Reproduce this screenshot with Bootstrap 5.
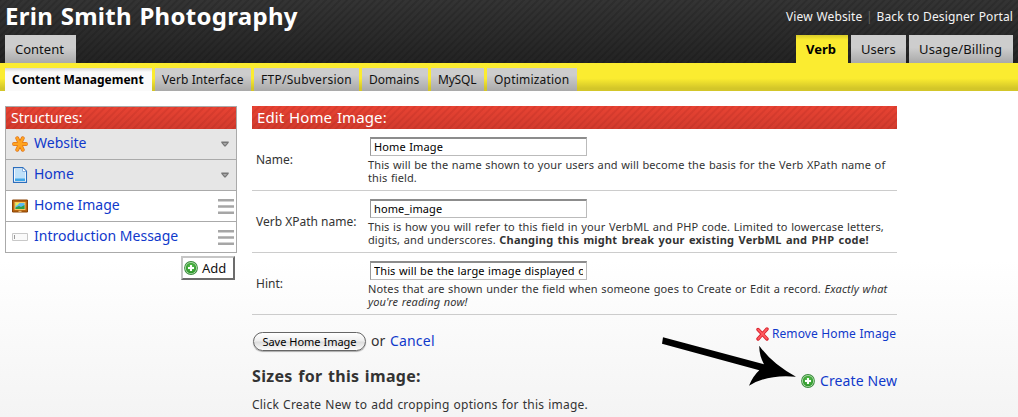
<!DOCTYPE html>
<html lang="en">
<head>
<meta charset="utf-8">
<title>Erin Smith Photography</title>
<link href="https://cdn.jsdelivr.net/npm/bootstrap@5.3.0/dist/css/bootstrap.min.css" rel="stylesheet">
<style>
body{font-family:"Noto Sans",sans-serif;font-size:12px;line-height:16px;color:#333;height:417px;overflow:hidden;background:linear-gradient(#fff 260px,#f4f4f4 417px)}
a{color:#1039cb;text-decoration:none}
.site-head{height:63px;background:repeating-linear-gradient(135deg,rgba(0,0,0,.13) 0 1px,transparent 2px 4px,rgba(0,0,0,.13) 5px),linear-gradient(#343434,#232323);padding:0 5px}
h1{font-size:24px;line-height:31px;font-weight:700;letter-spacing:.29px;word-spacing:1px;color:#fff;height:35px}
.portal-links{color:#666;padding-top:9px;letter-spacing:.12px;word-spacing:.5px}
.portal-links a{color:#f4f4f4}
.tab{display:block;height:28px;padding:0 0 0 10px;line-height:29px;font-size:13px;color:#111;background:linear-gradient(#cdcdcd 45%,#a9a9a9)}
.tab.on{background:linear-gradient(#d8cb29,#fbec30 5px);font-weight:700;color:#000}
.tabs{gap:3px}
.w-content{width:71px}
.w-verb{width:52px}
.w-users{width:55px}
.w-usage{width:104px;letter-spacing:.16px}
.bar{height:28px;background:linear-gradient(#fbec30 55%,#d3c629 90%);padding:5px 5px 0}
.sub{height:23px;padding:0 0 0 7px;line-height:23px;color:#111;background:linear-gradient(#cdcdcd 30%,#a9a9a9)}
.sub.on{background:linear-gradient(#d6d6d6,#fafafa 4px);color:#000;font-weight:700}
.w-cm{width:147px}
.w-vi{width:96px;letter-spacing:.1px}
.w-ftp{width:105px;letter-spacing:.28px}
.w-dom{width:66px}
.w-sql{width:53px;letter-spacing:-.2px}
.w-opt{width:90px;letter-spacing:.2px}
.red{background:repeating-linear-gradient(135deg,rgba(90,0,0,.09) 0 1px,transparent 2px 4px,rgba(90,0,0,.09) 5px),linear-gradient(#e84333,#d23b2d);color:#fff;height:23px;line-height:23px;padding-left:5px}
main{padding:15px 0 0 5px}
.side{width:232px}
.structure{border:1px solid #aaa}
.structure .red{height:22px;font-size:14px;line-height:21px}
.item{height:31px;padding:0 5px 3px 6px;font-size:14px;border-top:1px solid #aaa}
.item.first{border-top:0;height:30px}
.item.group{background:#e6e6e6;padding-right:7px}
.item.leaf{padding-right:2px}
.item svg:first-child{margin-right:6px;position:relative;top:1px}
.item .end{margin-top:2px}
.item .grip{margin-top:3px}
.add-btn{width:54px;height:24px;border:2px solid;border-color:#c6c6c6 #6c6c6c #6c6c6c #c6c6c6;background:#fff;font-size:13px;line-height:18px;color:#111;margin:3px 2px 0 0}
.add-btn svg{margin:0 4px 0 1px}
.pane{width:645px;margin-left:15px}
.pane>.red{font-size:15px;letter-spacing:.1px;word-spacing:.8px}
.frow{height:62px;border-bottom:1px solid #ccc}
.frow>div{padding-top:2px}
.frow label{width:116px;padding:1px 0 0 4px}
.frow input{display:block;width:217px;height:19px;border:1px solid #bbb;border-top:2px solid #8c8c8c;border-left-color:#999;border-radius:0;background:#fff;padding:0 3px 1px;margin:0 0 2px 2px;font-size:11px;line-height:15px;color:#000;outline:0;letter-spacing:.12px;word-spacing:.5px}
.help{font-size:11px;line-height:13px;letter-spacing:.11px;word-spacing:.6px;white-space:nowrap}
.help b{letter-spacing:.21px;word-spacing:1.2px}
.save-row{padding:15px 0 0 1px}
.save{width:113px;height:19px;border:1px solid #666;border-radius:10px;background:linear-gradient(#fff,#eee 48%,#dcdcdc 52%,#fcfcfc);font-size:11px;line-height:15px;color:#000;padding:0 0 1px;box-shadow:0 1px 1px #aaa;margin-top:2px}
.or-cancel{font-size:14px;margin-left:5px;word-spacing:1px}
.or-cancel a{letter-spacing:.2px}
h2{font-size:16px;line-height:20px;font-weight:700;letter-spacing:.32px;word-spacing:1px;margin:15px 0 0}
.note{margin:11px 0 0;letter-spacing:.22px;word-spacing:.7px}
.remove{margin:11px 1px 0 0;letter-spacing:.08px;word-spacing:.4px}
.remove svg{margin-right:3px}
.create{margin-top:31px;font-size:14px;letter-spacing:.1px}
.create svg{margin:-1px 5px 0 0}
.arrow{left:655px;top:330px}
</style>
<script src="https://cdn.jsdelivr.net/npm/bootstrap@5.3.0/dist/js/bootstrap.bundle.min.js"></script>
</head>
<body>
<svg width="0" height="0" class="position-absolute">
<defs>
<radialGradient id="green" cx=".5" cy=".4" r=".6"><stop offset="0" stop-color="#62c556"/><stop offset="1" stop-color="#2a9429"/></radialGradient>
<symbol id="plus" viewBox="0 0 14 14"><circle cx="7" cy="7" r="6.9" fill="#37893a"/><circle cx="7" cy="7" r="6" fill="#b6e3b0"/><circle cx="7" cy="7" r="5.2" fill="url(#green)"/><path d="M7 4v6M4 7h6" stroke="#fff" stroke-width="2"/></symbol>
<symbol id="down" viewBox="0 0 8 6"><path d="M.3.5h7.4v1.2L4.6 5.5H3.4L.3 1.7z" fill="#777"/><path d="M2 2h4L4 4.200z" fill="#aaa"/></symbol>
<symbol id="grip" viewBox="0 0 16 15"><path d="M0 0h16v2.500H0zM0 6.300h16v2.400H0zM0 12.500h16V15H0z" fill="#a6a6a6"/></symbol>
</defs>
</svg>

<header class="site-head d-flex justify-content-between">
  <div>
    <h1 class="m-0">Erin Smith Photography</h1>
    <nav class="d-flex tabs"><a class="tab w-content" href="#">Content</a></nav>
  </div>
  <div class="d-flex flex-column justify-content-between align-items-end">
    <div class="portal-links"><a href="#">View Website</a> | <a href="#">Back to Designer Portal</a></div>
    <nav class="d-flex tabs">
      <a class="tab on w-verb" href="#">Verb</a>
      <a class="tab w-users" href="#">Users</a>
      <a class="tab w-usage" href="#">Usage/Billing</a>
    </nav>
  </div>
</header>
<nav class="bar d-flex tabs">
  <a class="sub on w-cm" href="#">Content Management</a>
  <a class="sub w-vi" href="#">Verb Interface</a>
  <a class="sub w-ftp" href="#">FTP/Subversion</a>
  <a class="sub w-dom" href="#">Domains</a>
  <a class="sub w-sql" href="#">MySQL</a>
  <a class="sub w-opt" href="#">Optimization</a>
</nav>

<main class="d-flex">
  <aside class="side">
    <div class="structure">
      <div class="red">Structures:</div>
      <div class="item group first d-flex align-items-center">
        <svg width="16" height="16" viewBox="0 0 16 16"><g stroke="#e0741b" stroke-width="3.800" stroke-linecap="round"><path d="M2 8h12M5.200 2.200l5.600 11.600M10.800 2.200L5.200 13.800"/></g><g stroke="#ffa41f" stroke-width="2.400" stroke-linecap="round"><path d="M2 8h12M5.200 2.200l5.600 11.600M10.800 2.200L5.200 13.800"/></g></svg>
        <a href="#">Website</a><svg class="ms-auto end" width="8" height="6"><use href="#down"/></svg>
      </div>
      <div class="item group d-flex align-items-center">
        <svg width="16" height="16" viewBox="0 0 16 16"><path d="M1.500.6h9.300l3.700 3.600v11.200h-13z" fill="#fff" stroke="#2b6ebd" stroke-width="1.100"/><path d="M3 2h7v3h3.200v9H3z" fill="#bfe1f9"/><path d="M10.500 1v3.500h3.700" fill="#fff" stroke="#6da0d8" stroke-width=".8"/><path d="M3 11.500h10V14H3z" fill="#3fa7e8"/></svg>
        <a href="#">Home</a><svg class="ms-auto end" width="8" height="6"><use href="#down"/></svg>
      </div>
      <div class="item leaf d-flex align-items-center">
        <svg width="16" height="16" viewBox="0 0 16 16"><path d="M.5 2h15v12H.5z" fill="#b8650f" stroke="#8a4305"/><path d="M2.500 4h11v8h-11z" fill="#f8c860"/><path d="M3.500 5h9v6h-9z" fill="#5ab9ef"/><path d="M3.500 9.500L7 8l2 1 3.500-2v4h-9z" fill="#2f9e46"/><path d="M3.500 5h4L5 7.500l-1.500.5z" fill="#e8ef56"/><path d="M6.500 13.300h3" stroke="#f5d28a"/></svg>
        <a href="#">Home Image</a><svg class="ms-auto grip" width="16" height="15"><use href="#grip"/></svg>
      </div>
      <div class="item leaf d-flex align-items-center">
        <svg width="16" height="16" viewBox="0 0 16 16"><path d="M.5 4.500h15v7H.5z" fill="#fafafa" stroke="#c8c8c8"/><path d="M2.500 6v4" stroke="#999"/></svg>
        <a href="#">Introduction Message</a><svg class="ms-auto grip" width="16" height="15"><use href="#grip"/></svg>
      </div>
    </div>
    <div class="d-flex justify-content-end"><button class="add-btn d-flex align-items-center p-0"><svg width="14" height="14"><use href="#plus"/></svg>Add</button></div>
  </aside>

  <section class="pane">
    <div class="red">Edit Home Image:</div>
    <div class="frow d-flex align-items-center">
      <label>Name:</label>
      <div><input value="Home Image"><div class="help">This will be the name shown to your users and will become the basis for the Verb XPath name of<br>this field.</div></div>
    </div>
    <div class="frow d-flex align-items-center">
      <label>Verb XPath name:</label>
      <div><input value="home_image"><div class="help">This is how you will refer to this field in your VerbML and PHP code. Limited to lowercase letters,<br>digits, and underscores. <b>Changing this might break your existing VerbML and PHP code!</b></div></div>
    </div>
    <div class="frow d-flex align-items-center">
      <label>Hint:</label>
      <div><input value="This will be the large image displayed on the home page"><div class="help">Notes that are shown under the field when someone goes to Create or Edit a record. <i>Exactly what<br>you're reading now!</i></div></div>
    </div>
    <div class="d-flex justify-content-between">
      <div>
        <div class="save-row d-flex align-items-center"><button class="save">Save Home Image</button><span class="or-cancel">or <a href="#">Cancel</a></span></div>
        <h2>Sizes for this image:</h2>
        <p class="note">Click Create New to add cropping options for this image.</p>
      </div>
      <div class="d-flex flex-column align-items-end">
        <a href="#" class="remove d-flex align-items-center"><svg width="13" height="14" viewBox="0 0 13 14"><path d="M2 2.500l9 9.500M11 2L2 12" stroke="#d8202c" stroke-width="3.400" stroke-linecap="round"/><path d="M2.200 2.700l8.600 9M10.800 2.200L2.200 11.800" stroke="#ff5a5e" stroke-width="1.800" stroke-linecap="round"/></svg>Remove Home Image</a>
        <a href="#" class="create d-flex align-items-center"><svg width="14" height="14"><use href="#plus"/></svg>Create New</a>
      </div>
    </div>
  </section>
</main>
<svg class="arrow position-absolute" width="150" height="64" viewBox="655 330 150 64"><path d="M663 337.300L764 364.300Q759 355 759.300 345.700Q772 364 796 376.700Q768 374 749 385.700Q753 376 759.300 370.300L662 343.700z"/></svg>
</body>
</html>
